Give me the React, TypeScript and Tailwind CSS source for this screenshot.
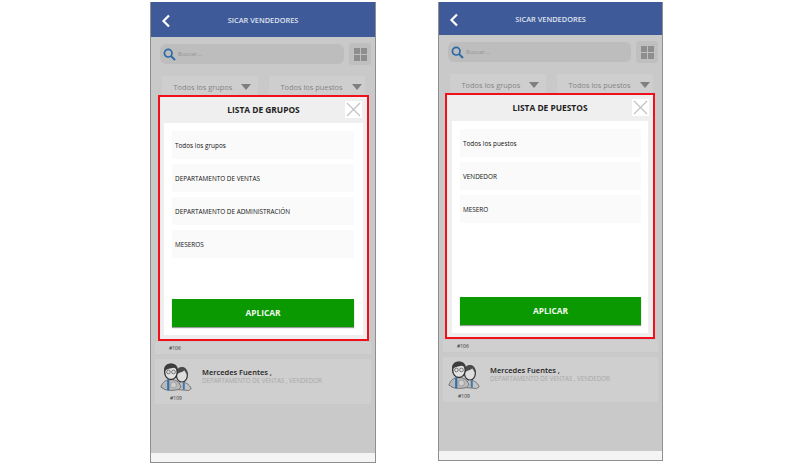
const font = { fontFamily: '"Open Sans", "Liberation Sans", sans-serif' };

function Avatar() {
  return (
    <svg width="32" height="30" viewBox="0 0 38 34" className="shrink-0">
      <ellipse cx="26" cy="15" rx="6.5" ry="8" fill="#dedede" stroke="#3a3a3a" strokeWidth="1.5" />
      <path d="M19 14c0-6 3-9 7-9s7 3 7 9c-2-1-3-3-4-5-2 2-6 3-10 5z" fill="#4a4a4a" />
      <path d="M22 32c0-6 1-9 4-9s9 2 11 8l-3 2z" fill="#c4c4c4" stroke="#666" strokeWidth="1" />
      <rect x="27" y="23" width="2.4" height="9" fill="#3d78b0" />
      <path d="M1 29c2-6 6-9 12-9s10 3 12 9l-3 3-8 1-8-1z" fill="#b9b9b9" stroke="#666" strokeWidth="1" />
      <ellipse cx="13" cy="11" rx="7.5" ry="9" fill="#e2e2e2" stroke="#333" strokeWidth="1.6" />
      <path d="M5 10c-1-6 3-9 8-9s9 3 8 9c-1-2-3-4-5-4-3 1-8 1-11 4z" fill="#3d3d3d" />
      <circle cx="10" cy="11" r="2.2" fill="none" stroke="#444" strokeWidth="0.8" />
      <circle cx="16" cy="11" r="2.2" fill="none" stroke="#444" strokeWidth="0.8" />
      <rect x="8.5" y="20" width="2.6" height="13" fill="#2f6fae" />
      <circle cx="16" cy="26.5" r="3.5" fill="#d0d0d0" stroke="#888" strokeWidth="0.7" />
    </svg>
  );
}

function Phone({
  title,
  items,
  wide,
  headerH,
  frameH,
  modalPos,
  closePos,
  cardClass,
}: {
  title: string;
  items: string[];
  wide: boolean;
  headerH: string;
  frameH: string;
  modalPos: string;
  closePos: string;
  cardClass: string;
}) {
  return (
    <div className={`relative mt-[2px] flex flex-col border-x border-b border-[#8f8f8f] bg-[#c9c9c9] ${wide ? "w-[226px]" : "w-[225px]"} ${frameH}`}>
      <div className={`flex shrink-0 items-center bg-[#3f5a99] pl-[10px] pt-[3px] ${headerH}`}>
        <svg width="10" height="14" viewBox="0 0 10 14">
          <path d="M8 1.5 2.5 7 8 12.5" fill="none" stroke="#fff" strokeWidth="2.2" />
        </svg>
        <span className="flex-1 pr-[20px] text-center text-[7.4px] font-semibold text-[#dfe4ef]">SICAR VENDEDORES</span>
      </div>

      <div className="flex items-center gap-[5px] pl-[9px] pr-[4px] pt-[6px]">
        <div className="flex h-[20px] w-[184px] items-center gap-[2px] rounded-[6px] bg-[#bdbdbd] pl-[3px]">
          <svg width="13" height="13" viewBox="0 0 13 13">
            <circle cx="5.2" cy="5.2" r="3.8" fill="none" stroke="#2a6aa8" strokeWidth="1.7" />
            <path d="M8 8l4 4" stroke="#2a6aa8" strokeWidth="2" />
          </svg>
          <span className="text-[6px] text-[#949494]">Buscar...</span>
        </div>
        <div className="grid h-[22px] w-[22px] grid-cols-2 place-content-center gap-[1px] rounded-[3px] bg-[#bfbfbf]">
          <div className="h-[6px] w-[6px] justify-self-end bg-[#8e8e8e]" />
          <div className="h-[6px] w-[6px] bg-[#8e8e8e]" />
          <div className="h-[6px] w-[6px] justify-self-end bg-[#8e8e8e]" />
          <div className="h-[6px] w-[6px] bg-[#8e8e8e]" />
        </div>
      </div>

      <div className="mt-[11px] flex gap-[11px] pl-[11px]">
        {["Todos los grupos", "Todos los puestos"].map((t) => (
          <div key={t} className="flex h-[24px] w-[96px] items-start gap-[9px] bg-[#cecece] pl-[11.5px] pt-[6px]">
            <span className="text-[7.4px] leading-[10px] text-[#858585]">{t}</span>
            <div className="mt-[2px] h-0 w-0 border-x-[5.5px] border-t-[6px] border-x-transparent border-t-[#7f7f7f]" />
          </div>
        ))}
      </div>

      <div className="mx-[4px] mt-[242px] flex h-[12px] items-end bg-[#cfcfcf] pb-[3px] pl-[14px]">
        <span className="text-[5px] leading-[6px] text-[#333]">#106</span>
      </div>

      <div className="mx-[4px] mt-[5px] flex h-[45px] bg-[#cfcfcf] pl-[5px] pt-[3px]">
        <div className="flex w-[32px] shrink-0 flex-col items-center">
          <Avatar />
          <span className="mt-[3px] text-[5px] leading-[6px] text-[#333]">#109</span>
        </div>
        <div className="ml-[10px] pt-[6px]">
          <div className="text-[7.5px] font-semibold leading-[9px] text-[#222]">Mercedes Fuentes ,</div>
          <div className="text-[6.2px] leading-[8px] text-[#a8a8a8]">DEPARTAMENTO DE VENTAS , VENDEDOR</div>
        </div>
      </div>

      <div className="mt-auto h-[9px] bg-[#f4f4f4]" />

      <div className={`absolute flex h-[246px] flex-col border-2 border-[#f0101a] bg-[#efefef] ${modalPos}`}>
        <div className="relative flex h-[26px] shrink-0 items-center justify-center">
          <span className="text-[8.4px] font-bold text-[#222]">{title}</span>
          <div className={`absolute top-[4px] flex h-[17px] w-[17px] items-center justify-center bg-white ${closePos}`}>
            <svg width="15" height="15" viewBox="0 0 15 15">
              <path d="M1 1l13 13M14 1 1 14" stroke="#c2c2c2" strokeWidth="1.2" />
            </svg>
          </div>
        </div>
        <div className={`mb-[4px] flex flex-1 flex-col bg-white pl-[8px] pt-[8px] ${cardClass}`}>
          <div className="flex flex-col gap-[5px]">
            {items.map((it) => (
              <div key={it} className="flex h-[28px] items-center bg-[#fafafa] pl-[3px] pt-[1px]">
                <span className="text-[6.4px] text-[#111]">{it}</span>
              </div>
            ))}
          </div>
          <div className="mt-auto mb-[8px] flex h-[28px] items-center justify-center bg-[#0a9900] shadow-[0_1px_1px_#9a9a9a]">
            <span className="text-[8.4px] font-bold text-[#eef7ee]">APLICAR</span>
          </div>
        </div>
      </div>
    </div>
  );
}

export default function App() {
  return (
    <div className="flex h-[470px] w-[810px] items-start gap-[62px] bg-white pl-[150px]" style={font}>
      <Phone
        title="LISTA DE GRUPOS"
        wide
        headerH="h-[35px]"
        frameH="h-[461px]"
        modalPos="left-[7px] top-[93px] w-[211px]"
        closePos="right-[5px]"
        cardClass="mx-[4px] pr-[9px]"
        items={["Todos los grupos", "DEPARTAMENTO DE VENTAS", "DEPARTAMENTO DE ADMINISTRACIÓN", "MESEROS"]}
      />
      <Phone
        title="LISTA DE PUESTOS"
        wide={false}
        headerH="h-[33px]"
        frameH="h-[459px]"
        modalPos="left-[6px] top-[91px] w-[210px]"
        closePos="right-[4px]"
        cardClass="mx-[5px] pr-[7px]"
        items={["Todos los puestos", "VENDEDOR", "MESERO"]}
      />
    </div>
  );
}
